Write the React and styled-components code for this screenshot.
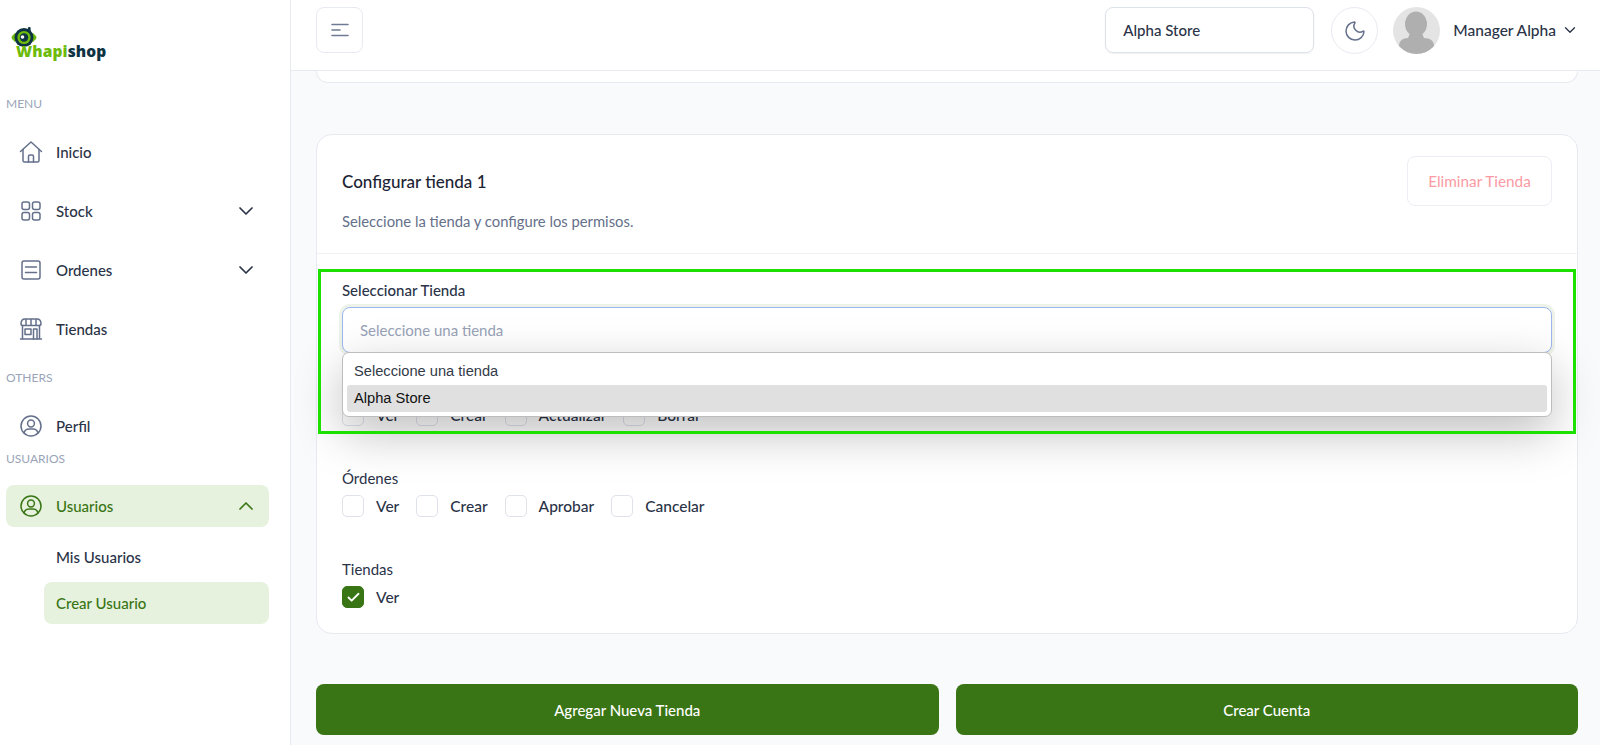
import React from 'react'
import styled, { createGlobalStyle } from 'styled-components'
import { ChevronDown, ChevronUp, Moon, Check } from 'lucide-react'

const GlobalStyle = createGlobalStyle`
    html, body {
        margin: 0;
        padding: 0;
        height: 745px;
        overflow: hidden;
        background: #f9fafb;
        font-family: "Lato", "Open Sans", sans-serif;
        color: #1c2434;
    }
    * {
        box-sizing: border-box;
    }
`

const Page = styled.div`
    display: flex;
    width: 1600px;
    height: 745px;
    overflow: hidden;
`

const Sidebar = styled.aside`
    width: 291px;
    flex-shrink: 0;
    background: #fff;
    border-right: 1px solid #e8eaf1;
    padding: 0 21px 0 6px;
`

const LogoWrap = styled.div`
    height: 70px;
    padding: 27px 0 0 4px;
    position: relative;

    svg {
        display: block;
    }
`

const LogoText = styled.div`
    font-family: "Open Sans", sans-serif;
    font-weight: 800;
    font-size: 15.5px;
    line-height: 16px;
    margin: -5px 0 0 6px;
    color: #0e3342;
    letter-spacing: 0.1px;

    span {
        color: #6dbb0c;
    }
`

const SectionLabel = styled.div`
    font-size: 12px;
    color: #9aa4b8;
    height: ${props => props.$h}px;
    line-height: 16px;
    padding-top: ${props => props.$top}px;
`

const NavItem = styled.div`
    height: 42px;
    margin-bottom: ${props => props.$mb || 0}px;
    margin-left: ${props => props.$sub ? '38px' : '0'};
    border-radius: 8px;
    display: flex;
    align-items: center;
    gap: 13px;
    padding: 0 11px 0 ${props => props.$sub ? '12px' : '14px'};
    font-size: 15px;
    font-weight: 500;
    color: ${props => props.$active ? '#3a7515' : '#2a3347'};
    background: ${props => props.$active ? '#e6f2de' : 'transparent'};

    svg {
        flex-shrink: 0;
    }
`

const NavIcon = styled.svg`
    width: 24px;
    height: 24px;
    fill: none;
    stroke: ${props => props.$active ? '#3a7515' : '#64708a'};
    stroke-width: 1.5;
    stroke-linecap: round;
    stroke-linejoin: round;
    margin-left: -1px;
`

const NavText = styled.span`
    flex: 1;
`

const Main = styled.div`
    flex: 1;
    min-width: 0;
    display: flex;
    flex-direction: column;
`

const Header = styled.header`
    height: 71px;
    flex-shrink: 0;
    background: #fff;
    border-bottom: 1px solid #e8eaf1;
    display: flex;
    align-items: flex-start;
    padding: 7px 21px 0 25px;
`

const MenuButton = styled.button`
    width: 47px;
    height: 46px;
    border: 1px solid #e8eaf1;
    border-radius: 8px;
    background: #fff;
    display: flex;
    align-items: center;
    justify-content: center;
    padding: 0;
    margin-right: auto;
`

const StoreSelect = styled.div`
    width: 209px;
    height: 46px;
    border: 1px solid #dde1ea;
    border-radius: 8px;
    box-shadow: 0 1px 2px rgba(16, 24, 40, 0.06);
    display: flex;
    align-items: center;
    padding-left: 17px;
    font-size: 15px;
    font-weight: 500;
    color: #2a3347;
`

const RoundButton = styled.button`
    width: 47px;
    height: 47px;
    border: 1px solid #e8eaf1;
    border-radius: 50%;
    background: #fff;
    display: flex;
    align-items: center;
    justify-content: center;
    padding: 0;
    margin: 0 15px 0 17px;
    color: #64708a;
`

const UserName = styled.span`
    font-size: 15.5px;
    font-weight: 500;
    color: #2a3347;
    margin: 0 5px 0 13px;
    line-height: 46px;
`

const UserCaret = styled.span`
    height: 46px;
    display: flex;
    align-items: center;
    color: #2a3347;
`

const Content = styled.main`
    flex: 1;
    padding: 0 22px 0 25px;
    position: relative;
`

const CardTail = styled.div`
    height: 12px;
    background: #fff;
    border: 1px solid #e8eaf1;
    border-top: none;
    border-radius: 0 0 16px 16px;
    margin-bottom: 51px;
`

const Card = styled.section`
    height: 500px;
    background: #fff;
    border: 1px solid #e8eaf1;
    border-radius: 16px;
    overflow: visible;
`

const CardHead = styled.div`
    height: 119px;
    padding: 21px 25px 0 25px;
    border-bottom: 1px solid #f0f2f6;
    display: flex;
    justify-content: space-between;
`

const CardTitle = styled.h3`
    margin: 0;
    padding-top: 16px;
    font-size: 17px;
    font-weight: 500;
    line-height: 20px;
    color: #1c2434;
`

const CardSub = styled.p`
    margin: 0;
    padding-top: 20px;
    font-size: 14.8px;
    line-height: 18px;
    color: #64708a;
`

const DangerButton = styled.button`
    width: 145px;
    height: 50px;
    border: 1px solid #eceef3;
    border-radius: 8px;
    background: #fff;
    font-family: inherit;
    font-size: 15.3px;
    color: #fb9aa3;
`

const CardBody = styled.div`
    padding: 27px 25px 0 25px;
`

const Field = styled.div`
    position: relative;
    height: 97px;
`

const FieldLabel = styled.div`
    font-size: 15px;
    font-weight: 500;
    line-height: 18px;
    color: #2a3347;
    margin-bottom: 8px;
`

const SelectBox = styled.div`
    height: 46px;
    border: 1px solid #9db6ef;
    border-radius: 8px;
    box-shadow: 0 0 0 3px #eef3e9;
    background: #fff;
    display: flex;
    align-items: center;
    padding-left: 17px;
    font-size: 15px;
    color: #98a2b6;
`

const Dropdown = styled.div`
    position: absolute;
    z-index: 3;
    left: 0;
    right: 0;
    top: 71px;
    height: 65px;
    background: #fff;
    border-radius: 7px;
    border: 1px solid #bdbdbd;
    box-shadow: 0 16px 48px rgba(0, 0, 0, 0.25);
    padding: 5px 4px 0 4px;
    font-family: "Liberation Sans", Arial, sans-serif;
    font-size: 14.67px;
`

const DropdownOption = styled.div`
    height: 27px;
    line-height: 27px;
    padding-left: 7px;
    border-radius: 3px;
    color: ${props => props.$hover ? '#111' : '#333a48'};
    background: ${props => props.$hover ? '#e0e0e0' : 'transparent'};
`

const PermGroup = styled.div`
    height: 91px;
`

const PermTitle = styled.div`
    font-size: 15px;
    font-weight: 400;
    line-height: 18px;
    height: 26px;
    color: #2a3347;
`

const PermRow = styled.div`
    display: flex;
    align-items: center;
    gap: 17px;
`

const PermItem = styled.label`
    display: flex;
    align-items: center;
    gap: 12px;
    font-size: 15.5px;
    font-weight: 500;
    color: #2a3347;
`

const CheckBox = styled.span`
    width: 22px;
    height: 22px;
    border-radius: 5px;
    border: 1px solid ${props => props.$on ? '#3a7515' : '#dfe2ea'};
    background: ${props => props.$on ? '#3a7515' : '#fff'};
    display: flex;
    align-items: center;
    justify-content: center;
    color: #fff;
`

const Actions = styled.div`
    display: grid;
    grid-template-columns: 1fr 1fr;
    gap: 17px;
    margin-top: 50px;
`

const PrimaryButton = styled.button`
    height: 51px;
    border: none;
    border-radius: 8px;
    background: #3a7515;
    color: #fff;
    font-family: inherit;
    font-size: 15px;
    font-weight: 500;
`

const Highlight = styled.div`
    position: absolute;
    z-index: 5;
    left: 27px;
    top: 198px;
    width: 1258px;
    height: 165px;
    border: 3px solid #1ee000;
    pointer-events: none;
`

const LogoMark = () => (
    <svg width="28" height="21" viewBox="0 0 28 21">
        <path d="M5.5 5.5 L2 9 Q1 10.5 2 12 L5.5 15.5 Z" fill="#6dbb0c" />
        <path d="M22.5 5.5 L26 9 Q27 10.5 26 12 L22.5 15.5 Z" fill="#6dbb0c" />
        <circle cx="14" cy="10.5" r="9.5" fill="#0e3342" />
        <rect x="18" y="0" width="2.6" height="5" rx="1" fill="#0e3342" />
        <circle cx="14" cy="10.5" r="6.6" fill="#6dbb0c" />
        <circle cx="14" cy="10.5" r="4.2" fill="#0e3342" />
        <circle cx="12.5" cy="10" r="1.8" fill="#fff" />
    </svg>
)

const HomeIcon = ({ active }) => (
    <NavIcon viewBox="0 0 24 24" $active={active}>
        <path d="M1.5 11.5 L12 2 L22.5 11.5" />
        <path d="M4 9.5 V20.5 Q4 22 5.5 22 H18.5 Q20 22 20 20.5 V9.5" />
        <path d="M9.5 22 V16.5 Q9.5 15 11 15 H13 Q14.5 15 14.5 16.5 V22" />
    </NavIcon>
)

const GridIcon = () => (
    <NavIcon viewBox="0 0 24 24">
        <rect x="3" y="3" width="7.5" height="7.5" rx="2" />
        <rect x="13.5" y="3" width="7.5" height="7.5" rx="2" />
        <rect x="3" y="13.5" width="7.5" height="7.5" rx="2" />
        <rect x="13.5" y="13.5" width="7.5" height="7.5" rx="2" />
    </NavIcon>
)

const OrdersIcon = () => (
    <NavIcon viewBox="0 0 24 24">
        <rect x="3" y="3" width="18" height="18" rx="2" />
        <path d="M6.5 9 H17.5 M6.5 14.5 H17.5" />
    </NavIcon>
)

const StoreIcon = () => (
    <NavIcon viewBox="0 0 24 24">
        <path d="M2 7 Q2 2 6 2 H18 Q22 2 22 7 Q22 8.5 20 8.5 H4 Q2 8.5 2 7 Z" />
        <path d="M7 2.5 V8 M12 2.5 V8 M17 2.5 V8" />
        <path d="M3.5 8.5 V22 M20.5 8.5 V22 M1.5 22 H22.5" />
        <rect x="6" y="12" width="6" height="5.5" />
        <path d="M14.5 22 V12 H18 V22" />
    </NavIcon>
)

const UserIcon = ({ active }) => (
    <NavIcon viewBox="0 0 24 24" $active={active}>
        <circle cx="12" cy="12" r="10" />
        <circle cx="12" cy="9.5" r="3.4" />
        <path d="M5 19 Q6 15 10 15 H14 Q18 15 19 19" />
    </NavIcon>
)

const MenuIcon = () => (
    <svg width="18" height="14" viewBox="0 0 18 14" fill="none" stroke="#6f7b94" strokeWidth="1.6" strokeLinecap="round">
        <path d="M1 1.5 H17 M1 7 H9 M1 12.5 H17" />
    </svg>
)

const Avatar = () => (
    <svg width="47" height="47" viewBox="0 0 47 47">
        <defs>
            <clipPath id="avatar-clip">
                <circle cx="23.5" cy="23.5" r="23.5" />
            </clipPath>
        </defs>
        <g clipPath="url(#avatar-clip)">
            <rect width="47" height="47" fill="#e4e4e4" />
            <ellipse cx="23" cy="17" rx="11" ry="12.5" fill="#afafaf" />
            <path d="M17 26 H29 L31 31 Q40 31 41 38 V47 H6 V38 Q7 31 15 31 Z" fill="#afafaf" />
        </g>
    </svg>
)

const PermBox = ({ label, checked }) => (
    <PermItem>
        <CheckBox $on={checked}>{checked && <Check size={15} strokeWidth={3} />}</CheckBox>
        {label}
    </PermItem>
)

const App = () => (
    <Page>
        <GlobalStyle />
        <Sidebar>
            <LogoWrap>
                <LogoMark />
                <LogoText><span>Whapi</span>shop</LogoText>
            </LogoWrap>
            <SectionLabel $h={61} $top={26}>MENU</SectionLabel>
            <NavItem $mb={17}><HomeIcon /><NavText>Inicio</NavText></NavItem>
            <NavItem $mb={17}><GridIcon /><NavText>Stock</NavText><ChevronDown size={24} strokeWidth={1.7} color="#2a3347" /></NavItem>
            <NavItem $mb={17}><OrdersIcon /><NavText>Ordenes</NavText><ChevronDown size={24} strokeWidth={1.7} color="#2a3347" /></NavItem>
            <NavItem><StoreIcon /><NavText>Tiendas</NavText></NavItem>
            <SectionLabel $h={55} $top={20}>OTHERS</SectionLabel>
            <NavItem><UserIcon /><NavText>Perfil</NavText></NavItem>
            <SectionLabel $h={38} $top={4}>USUARIOS</SectionLabel>
            <NavItem $active $mb={9}><UserIcon active /><NavText>Usuarios</NavText><ChevronUp size={24} strokeWidth={1.7} color="#3a7515" /></NavItem>
            <NavItem $sub $mb={4}>Mis Usuarios</NavItem>
            <NavItem $sub $active>Crear Usuario</NavItem>
        </Sidebar>
        <Main>
            <Header>
                <MenuButton><MenuIcon /></MenuButton>
                <StoreSelect>Alpha Store</StoreSelect>
                <RoundButton><Moon size={24} strokeWidth={1.5} /></RoundButton>
                <Avatar />
                <UserName>Manager Alpha</UserName>
                <UserCaret><ChevronDown size={18} strokeWidth={1.7} /></UserCaret>
            </Header>
            <Content>
                <CardTail />
                <Card>
                    <CardHead>
                        <div>
                            <CardTitle>Configurar tienda 1</CardTitle>
                            <CardSub>Seleccione la tienda y configure los permisos.</CardSub>
                        </div>
                        <DangerButton>Eliminar Tienda</DangerButton>
                    </CardHead>
                    <CardBody>
                        <Field>
                            <FieldLabel>Seleccionar Tienda</FieldLabel>
                            <SelectBox>Seleccione una tienda</SelectBox>
                            <Dropdown>
                                <DropdownOption>Seleccione una tienda</DropdownOption>
                                <DropdownOption $hover>Alpha Store</DropdownOption>
                            </Dropdown>
                        </Field>
                        <PermGroup>
                            <PermTitle />
                            <PermRow>
                                <PermBox label="Ver" />
                                <PermBox label="Crear" />
                                <PermBox label="Actualizar" />
                                <PermBox label="Borrar" />
                            </PermRow>
                        </PermGroup>
                        <PermGroup>
                            <PermTitle>Órdenes</PermTitle>
                            <PermRow>
                                <PermBox label="Ver" />
                                <PermBox label="Crear" />
                                <PermBox label="Aprobar" />
                                <PermBox label="Cancelar" />
                            </PermRow>
                        </PermGroup>
                        <PermGroup>
                            <PermTitle>Tiendas</PermTitle>
                            <PermRow>
                                <PermBox label="Ver" checked />
                            </PermRow>
                        </PermGroup>
                    </CardBody>
                </Card>
                <Actions>
                    <PrimaryButton>Agregar Nueva Tienda</PrimaryButton>
                    <PrimaryButton>Crear Cuenta</PrimaryButton>
                </Actions>
                <Highlight />
            </Content>
        </Main>
    </Page>
)

export default App
